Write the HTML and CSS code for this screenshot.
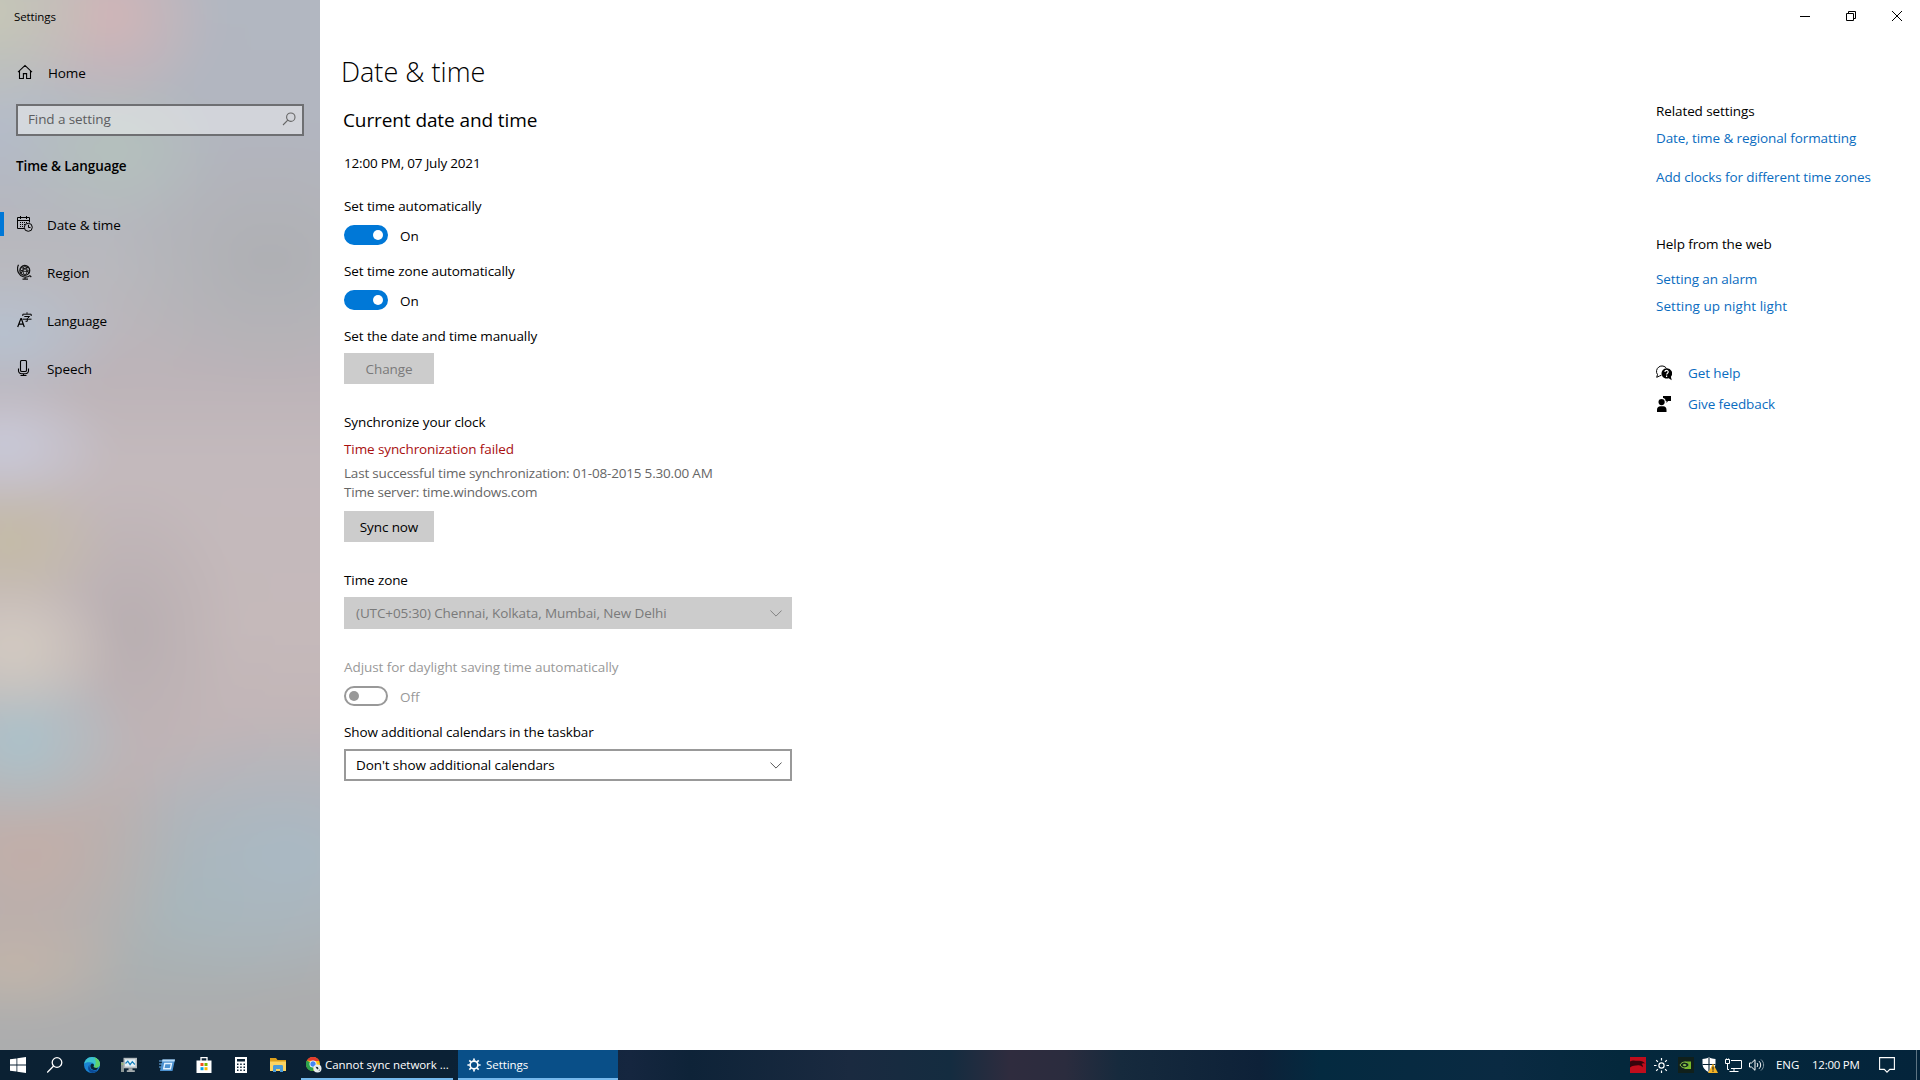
FILE: index.html
```html
<!DOCTYPE html>
<html lang="en">
<head>
  <meta charset="UTF-8">
  <meta name="viewport" content="width=device-width, initial-scale=1.0">
  <title>Settings</title>
  <link rel="stylesheet" href="styles.css">
</head>
<body>
  <div class="window">
    <aside class="sidebar">
      <div class="title">Settings</div>
      <a class="home">
        <svg width="16" height="16" viewBox="0 0 16 16" fill="none" stroke="#000" stroke-width="1.1">
          <path d="M1 8.2 8 1.4l7 6.8M2.5 7v7.5h3.9V9.6h3.2v4.9h3.9V7"/>
        </svg>
        <span>Home</span>
      </a>
      <div class="search">
        <span>Find a setting</span>
        <svg width="14" height="14" viewBox="0 0 14 14" fill="none" stroke="#666" stroke-width="1.1">
          <circle cx="8.8" cy="5.2" r="4.2"/>
          <path d="M5.8 8.2 1 13"/>
        </svg>
      </div>
      <h2 class="category">Time &amp; Language</h2>
      <nav class="nav">
        <a class="nav-item active">
          <svg width="16" height="16" viewBox="0 0 16 16" fill="none" stroke="#000">
            <path d="M7.5 12.5h-7v-11h12v5M.5 4.5h12M3.5 0v3M9.5 0v3"/>
            <path d="M3 6.5h1m1 0h1m1 0h1m1 0h1M3 8.5h1m1 0h1m1 0h1M3 10.5h1m1 0h1"/>
            <circle cx="11.3" cy="11.3" r="4"/>
            <path d="M11.5 8.8v2.7h2"/>
          </svg>
          <span>Date &amp; time</span>
        </a>
        <a class="nav-item">
          <svg width="16" height="16" viewBox="0 0 16 16" fill="none" stroke="#111">
            <circle cx="7.8" cy="6.4" r="4.9" stroke-width="1.3"/>
            <path d="M4 3.6c3 0 6.5 2.5 7.8 5.6M11.3 3.2c-3 .4-6.2 3-7.2 6.2M8 1.6c-2.600 2.700-2.800 6.400-.4 9.500M8 1.600c2.600 2.700 2.800 6.400.4 9.500M3 5.500c2.600 2.200 6.200 2.600 9.600.8"/>
            <path d="M1.500.8C.4 3 .2 6.200 1.500 8.800c1.900 4 7.200 5.600 11.400 3L14.300 13M8 13v2M5.500 15.200H11" stroke-width="1.200"/>
          </svg>
          <span>Region</span>
        </a>
        <a class="nav-item">
          <svg width="16" height="16" viewBox="0 0 16 16" fill="none" stroke="#000">
            <path d="M.7 15 3.900 6.500h.4L7.300 15M1.800 12.200h4.500" stroke-width="1.200"/>
            <path d="M10 .3v1.500M5.800 4V2.200h8.400V4M7.300 4.500h5.300l-2.300 2M5.500 7.200h9M10.300 6.500v2.800H8.500"/>
          </svg>
          <span>Language</span>
        </a>
        <a class="nav-item">
          <svg width="16" height="16" viewBox="0 0 16 16" fill="none" stroke="#000" stroke-width="1.1">
            <rect x="3.500" y=".5" width="6" height="11" rx="1.300"/>
            <path d="M1.500 8.500v2.300a3 3 0 0 0 3 3h4a3 3 0 0 0 3-3V8.500M6.500 13.800v2M3.500 15.500h6"/>
          </svg>
          <span>Speech</span>
        </a>
      </nav>
    </aside>

    <main class="content">
      <h1>Date &amp; time</h1>
      <h2>Current date and time</h2>
      <p class="now digits">12:00 PM, 07 July 2021</p>

      <p class="label first">Set time automatically</p>
      <div class="toggle-row"><span class="toggle on"></span><span class="state">On</span></div>
      <p class="label">Set time zone automatically</p>
      <div class="toggle-row"><span class="toggle on"></span><span class="state">On</span></div>
      <p class="label">Set the date and time manually</p>
      <button class="btn" disabled>Change</button>

      <p class="label section">Synchronize your clock</p>
      <p class="error">Time synchronization failed</p>
      <p class="info digits">Last successful time synchronization: 01-08-2015 5.30.00 AM<br>Time server: time.windows.com</p>
      <button class="btn sync">Sync now</button>

      <p class="label section">Time zone</p>
      <div class="select disabled">
        <span>(UTC+05:30) Chennai, Kolkata, Mumbai, New Delhi</span>
        <svg width="12" height="7" viewBox="0 0 12 7" fill="none" stroke="#838383"><path d="m.4.5 5.600 5.600L11.600.5"/></svg>
      </div>

      <p class="label section muted">Adjust for daylight saving time automatically</p>
      <div class="toggle-row muted"><span class="toggle"></span><span class="state">Off</span></div>
      <p class="label tight">Show additional calendars in the taskbar</p>
      <div class="select">
        <span>Don't show additional calendars</span>
        <svg width="12" height="7" viewBox="0 0 12 7" fill="none" stroke="#555"><path d="m.4.5 5.600 5.600L11.600.5"/></svg>
      </div>
    </main>

    <aside class="related">
      <div class="controls">
        <svg width="10" height="10" viewBox="0 0 10 10" fill="none" stroke="#000"><path d="M0 5.500h10"/></svg>
        <svg width="10" height="10" viewBox="0 0 10 10" fill="none" stroke="#000"><path d="M.5 2.500h7v7h-7zM2.500 2.500v-2h7v7h-2"/></svg>
        <svg width="10" height="10" viewBox="0 0 10 10" fill="none" stroke="#000"><path d="m0 0 10 10M10 0 0 10"/></svg>
      </div>
      <p class="heading">Related settings</p>
      <a class="regional">Date, time &amp; regional formatting</a>
      <a class="clocks">Add clocks for different time zones</a>
      <p class="heading web">Help from the web</p>
      <a class="alarm">Setting an alarm</a>
      <a class="night">Setting up night light</a>
      <a class="with-icon help">
        <svg width="16" height="16" viewBox="0 0 16 16">
          <path d="M5.500 10.200 3.500 11 .7 12.300l.8-2.700A5.300 5.300 0 1 1 10.500 3.300" fill="none" stroke="#000"/>
          <path d="M10.500 3.200a5.200 5.200 0 1 0 2.200 10l3 2-.8-3.500a5.200 5.200 0 0 0-4.400-8.500z"/>
          <path d="M8.900 7c.1-2.100 3.400-2 3.300 0 0 1.200-1.600 1.200-1.600 2.600M10.600 10.500v1.400" fill="none" stroke="#fff" stroke-width="1.200"/>
        </svg>
        <span>Get help</span>
      </a>
      <a class="with-icon feedback">
        <svg width="16" height="16" viewBox="0 0 16 16">
          <circle cx="5.600" cy="6.100" r="3.100"/>
          <path d="M1 16v-2.200c0-2.300 1.500-3.500 3.300-3.500h3c1.900 0 3.200 1.200 3.200 3.500V16zM7 0h8v5h-3l-1.500 1.900V5h-.8C9.500 3.200 8.500 2.200 7 2z"/>
        </svg>
        <span>Give feedback</span>
      </a>
    </aside>
  </div>

  <footer class="taskbar">
    <div class="pins">
      <svg width="16" height="16" viewBox="0 0 16 16" fill="#fff"><path d="M0 2.300 6.500 1.400v6.200H0zM7.300 1.300 16 0v7.600H7.300zM0 8.400h6.500v6.200L0 13.700zM7.300 8.400H16V16l-8.700-1.300z"/></svg>
      <svg width="16" height="16" viewBox="0 0 16 16" fill="none" stroke="#fff" stroke-width="1.300"><circle cx="10" cy="5.500" r="4.800"/><path d="M6.600 9 .2 15.500"/></svg>
      <svg width="16" height="16" viewBox="0 0 16 16">
        <circle cx="8" cy="8" r="8" fill="#1b83d2"/>
        <path d="M.2 7C.9 2.800 4 0 8 0c4.700 0 8 3.400 8 7 0 2.300-1.700 4-4.100 4-1.300 0-2.400-.4-2.200-1.300.8-.9.7-3.700-2.200-4.200C4.500 5 1.500 5 .2 7z" fill="#3cc3cf"/>
        <path d="M10 .3c3.500.8 6 3.700 6 6.700 0 2.300-1.700 4-4.100 4-1.300 0-2.400-.4-2.200-1.300 2.600-1.600 2.800-6 .3-9.400z" fill="#5ed16c"/>
        <path d="M5.500 7.500c-.7 3.500 2.200 6.500 6.200 5.900.9-.1 1.800-.5 2.700-1a8 8 0 0 1-6 3.500C4 15.500 3 10.500 5.500 7.500z" fill="#0b4a96"/>
        <path d="M9.500 9.800c.7 1.300 3.300 1.500 5 .5l-1.800 2.500C8 14 5.700 10.700 6.600 8c.7-1.600 3-1.500 3.300 0 .1.700-.4 1.200-.4 1.800z" fill="#0a2436"/>
      </svg>
      <svg width="16" height="16" viewBox="0 0 16 16">
        <path d="M0 5h3v10H0z" fill="#8b9695"/><path d="M.6 6.500h1.800v1H.6z" fill="#9cdc52"/>
        <path d="M2.500.8H16v10.500H2.500z" fill="#b4bbbe"/><path d="M4 2.300h10.500v7.300H4z" fill="#e4f1f7"/>
        <path d="m4.500 6.500 2.300-2.300 2.300 3.500 2.200-3 2.500 2.800" fill="none" stroke="#1681bd" stroke-width="1.200"/>
        <path d="M7.500 11.300h4v2h2.300V15h-8v-1.700h1.700z" fill="#a5acae"/>
      </svg>
      <svg width="16" height="16" viewBox="0 0 16 16">
        <path d="M3.500 2.500H16L13.500 14H1z" fill="#4b91d0"/>
        <path d="M3.500 2.500H16l-.5 2H3z" fill="#b9dcf7"/>
        <path d="M5.800 6.500h6.700l-1.100 5.200H4.700z" fill="none" stroke="#e4f3ff" stroke-width="1.400"/>
        <path d="M0 4h3M0 7h3M0 10h2" stroke="#6eb4ef" stroke-width="1.200"/>
      </svg>
      <svg width="16" height="16" viewBox="0 0 16 16">
        <path d="M5 4V.7h6V4" fill="none" stroke="#fff" stroke-width="1.300"/>
        <path d="M.5 3.500h15V16H.5z" fill="#fff"/>
        <path d="M4.500 6h3v3h-3z" fill="#f25022"/><path d="M8.500 6h3v3h-3z" fill="#7fba00"/>
        <path d="M4.500 10.200h3v3h-3z" fill="#00a4ef"/><path d="M8.500 10.200h3v3h-3z" fill="#ffb900"/>
      </svg>
      <svg width="16" height="16" viewBox="0 0 16 16">
        <path d="M2 0h12v16H2z" fill="#fff"/>
        <path d="M4 2h8v2.500H4zM4 6.500h1.500V8H4zM7.200 6.500h1.500V8H7.200zM10.500 6.500H12V8h-1.500zM4 9.500h1.500V11H4zM7.200 9.500h1.500V11H7.200zM10.500 9.500H12V11h-1.500zM4 12.500h1.500V14H4zM7.200 12.500h1.500V14H7.200zM10.500 12.500H12V14h-1.500z" fill="#0b2133"/>
      </svg>
      <svg width="16" height="16" viewBox="0 0 16 16">
        <path d="M0 1h6l1.500 2H16v11H0z" fill="#dda01c"/>
        <path d="M0 4.500h16V14H0z" fill="#fcd462"/>
        <path d="M3 15V9.500c0-1 .5-1.500 1.500-1.500h7c1 0 1.500.5 1.500 1.500V15h-3v-3H6v3z" fill="#4a9bd8"/>
      </svg>
    </div>
    <div class="app chrome">
      <svg width="16" height="16" viewBox="0 0 16 16">
        <circle cx="7" cy="7" r="7" fill="#fbc116"/>
        <path d="M7 7 7.500 14A7 7 0 0 1 .9 3.400z" fill="#2ba24c"/>
        <path d="M.9 3.400A7 7 0 0 1 13.300 4H7z" fill="#e33b2e"/>
        <circle cx="7" cy="7" r="3.500" fill="#fff"/><circle cx="7" cy="7" r="2.700" fill="#4285f4"/>
        <circle cx="11.500" cy="11.500" r="4" fill="#e8eef0"/>
        <path d="m9.500 9.800 2.400.2.600 1.800-1.300.7zM12.500 13l1.500-.5-.8 1.600z" fill="#23343c"/>
      </svg>
      <span>Cannot sync network ...</span>
    </div>
    <div class="app active">
      <svg width="14" height="14" viewBox="0 0 14 14" fill="none" stroke="#fff">
        <circle cx="7" cy="7" r="3.900" stroke-width="1.700"/>
        <path d="M7 .4v2.300M7 11.300v2.300M.4 7h2.300M11.300 7h2.300M2.300 2.300 4 4M10 10l1.700 1.700M11.700 2.300 10 4M4 10l-1.700 1.700" stroke-width="1.700"/>
      </svg>
      <span>Settings</span>
    </div>
    <div class="tray">
      <svg width="16" height="16" viewBox="0 0 16 16">
        <path d="M0 0h16v16H0z" fill="#c00d1c"/>
        <path d="M0 4.500c3-2 6-.5 8-.8 3-.3 5.500.5 7.500 3-2-.6-3-.5-4 .4 1.500 1 1.500 2.200 1 3.200-1-1.600-2.500-2.300-4.500-2-3 .5-5.500.2-8 2.200z" fill="#35040c"/>
      </svg>
      <svg class="sun" width="15" height="15" viewBox="0 0 15 15" fill="none" stroke="#fff" stroke-width="1.200">
        <circle cx="7.500" cy="7.500" r="2.600"/>
        <path d="M7.500 0v2.500M7.500 12.500V15M0 7.500h2.500M12.500 7.500H15M2.200 2.200l1.700 1.700M11.100 11.100l1.700 1.700M12.800 2.200l-1.700 1.700M3.900 11.100l-1.700 1.700"/>
      </svg>
      <svg class="nvidia" width="16" height="16" viewBox="0 0 16 16">
        <path d="M0 0h16v16H0z" fill="#10201b"/>
        <path d="M6.500 4.500H13v7.500H6.500z" fill="#75b82a"/>
        <path d="M2 8c2-4 7.500-3.700 9.300 0-2.200 3.800-7.300 3.700-9.300 0z" fill="#10201b" stroke="#86bf48"/>
        <path d="M4.600 8c1-1.500 2.800-1.500 4 0-1 1.600-3 1.600-4 0z" fill="#86bf48"/>
      </svg>
      <svg class="shield" width="16" height="16" viewBox="0 0 16 16">
        <path d="M7 .3C5 1.500 3 2 .5 2v4.500c0 4.200 2.700 7 6.500 8.700 3.800-1.700 6.500-4.500 6.500-8.700V2C11 2 9 1.500 7 .3z" fill="#fff"/>
        <path d="M7 .5v14M.5 7.500h13" stroke="#0a2436" stroke-width="1.100"/>
        <path d="M11 6.500 16 16H6z" fill="#f5b324"/><path d="M11 9.500v3.200M11 13.500v1.300" stroke="#222" stroke-width="1.200"/>
      </svg>
      <svg class="net" width="17" height="15" viewBox="0 0 17 15" fill="none" stroke="#fff">
        <path d="M6 2.500h10.500v8H6M4.500 13.500h9M9 10.500v3M.5 1.500h4v4h-4zM1.500.5v1M3.500.5v1M2.500 5.500v6h1.500"/>
      </svg>
      <svg class="volume" width="16" height="14" viewBox="0 0 16 14" fill="none" stroke="#fff">
        <path d="M.5 5v4h2l3.500 3.300V1.700L2.500 5zM8 5c1 1.200 1 2.800 0 4M10 3.200c2.200 2.100 2.200 5.500 0 7.600"/>
        <path d="M12 1.500c3.500 3 3.500 8 0 11" stroke="#8699a5"/>
      </svg>
      <span class="lang">ENG</span>
      <span class="clock">12:00 PM</span>
      <svg class="action" width="16" height="16" viewBox="0 0 16 16" fill="none" stroke="#fff" stroke-width="1.1"><path d="M.6.600h14.800v11.800h-4.600L8 15.200l-2.700-2.800H.6z"/></svg>
      <span class="peek"></span>
    </div>
  </footer>
</body>
</html>
```
FILE: styles.css
```css
* {
  box-sizing: border-box;
}

body {
  margin: 0;
  width: 1920px;
  height: 1080px;
  overflow: hidden;
  display: flex;
  flex-direction: column;
  background: #fff;
  color: #000;
  font-family: "Open Sans", "Noto Sans", sans-serif;
  font-size: 13.5px;
  line-height: 20px;
  letter-spacing: -0.1px;
}

h1, h2, p {
  margin: 0;
}

svg {
  flex: none;
  display: block;
}

.window {
  flex: 1;
  display: flex;
}

/* sidebar */
.sidebar {
  position: relative;
  z-index: 0;
  width: 320px;
  padding-top: 9px;
  overflow: hidden;
}

/* acrylic backdrop, 60px larger than the sidebar on every side */
.sidebar::before {
  content: "";
  position: absolute;
  z-index: -1;
  inset: -60px;
  filter: blur(14px);
  background:
    radial-gradient(ellipse 120px 110px at 50px 70px, #c8c8b6, transparent),
    radial-gradient(ellipse 110px 100px at 168px 75px, #d2b4b6, transparent),
    radial-gradient(ellipse 110px 80px at 175px 210px, #b4c1bc, transparent),
    radial-gradient(ellipse 130px 90px at 65px 180px, #b5bcc9, transparent),
    radial-gradient(ellipse 120px 70px at 65px 395px, #b6c2d1, transparent),
    radial-gradient(ellipse 170px 130px at 330px 320px, #aeafb3, transparent),
    radial-gradient(ellipse 110px 65px at 65px 504px, #c9cada, transparent),
    radial-gradient(ellipse 105px 70px at 70px 602px, #c4bba5, transparent),
    radial-gradient(ellipse 105px 75px at 75px 708px, #d3cbc1, transparent),
    radial-gradient(ellipse 115px 90px at 80px 801px, #aac2cb, transparent),
    radial-gradient(ellipse 110px 150px at 190px 690px, #b8aeb1, transparent),
    radial-gradient(ellipse 160px 140px at 90px 915px, #c2aea8, transparent),
    radial-gradient(ellipse 120px 65px at 75px 1024px, #c2b6aa, transparent),
    radial-gradient(ellipse 190px 140px at 350px 915px, #a9b9c4, transparent),
    radial-gradient(ellipse 170px 120px at 245px 960px, #a7b5b8, transparent),
    linear-gradient(#b2b7c1 0, #b2b7c1 60px, #b2b5bf 210px, #b9b9be 330px, #bcb3b8 430px, #c3b9bc 520px, #c5b9ba 690px, #c1b5b7 790px, #b8b2b5 880px, #b0b0b2 960px, #acadae 1040px, #acacae 1170px);
}

.title {
  margin-left: 14px;
  font-size: 11.5px;
  line-height: 16px;
}

.home {
  display: flex;
  gap: 15px;
  margin: 38px 0 0 17px;
}

.home svg {
  margin-top: 1px;
}

.search {
  display: flex;
  align-items: center;
  justify-content: space-between;
  width: 288px;
  height: 32px;
  margin: 21px 0 0 16px;
  padding: 0 6px 2px 10px;
  border: 2px solid #6e6f72;
  background: rgba(255, 255, 255, 0.42);
  color: #5c5d60;
}

.category {
  margin: 20px 0 0 16px;
  font-size: 13.5px;
  font-weight: 600;
}

.nav {
  margin-top: 24px;
}

.nav-item {
  display: flex;
  align-items: center;
  gap: 14px;
  height: 48px;
  padding-left: 17px;
}

.nav-item span {
  padding-top: 2px;
}

.nav-item.active {
  padding-left: 0;
}

.nav-item.active::before {
  content: "";
  width: 4px;
  height: 24px;
  margin-right: -1px;
  background: #0078d7;
}

/* main column */
.content {
  flex: 1;
  padding: 54px 0 0 24px;
}

h1 {
  margin-left: -3px;
  font-size: 27px;
  font-weight: 300;
  line-height: 36px;
  letter-spacing: 0;
}

.content h2 {
  margin: 17px 0 0 -1px;
  font-size: 19px;
  font-weight: 400;
  line-height: 26px;
  letter-spacing: -0.1px;
}

.digits {
  letter-spacing: -0.19px;
}

.now {
  margin-top: 20px;
}

.label {
  margin-top: 16px;
}

.label.first {
  margin-top: 23px;
}

.label.section {
  margin-top: 28px;
}

.label.tight {
  letter-spacing: -0.14px;
}

.toggle-row {
  display: flex;
  gap: 12px;
  height: 20px;
  margin-top: 9px;
}

.toggle {
  display: flex;
  align-items: center;
  width: 44px;
  height: 20px;
  padding: 0 3px;
  border: 2px solid #999;
  border-radius: 10px;
}

.toggle::before {
  content: "";
  width: 10px;
  height: 10px;
  border-radius: 50%;
  background: #999;
}

.toggle.on {
  justify-content: flex-end;
  border-color: #0078d7;
  background: #0078d7;
}

.toggle.on::before {
  background: #fff;
}

.state {
  line-height: 22px;
}

.muted {
  color: #999;
  letter-spacing: -0.07px;
}

.btn {
  display: block;
  width: 90px;
  height: 31px;
  margin-top: 7px;
  padding: 0;
  border: 0;
  background: #ccc;
  color: #000;
  font: inherit;
  line-height: 32px;
  letter-spacing: inherit;
}

.btn:disabled {
  color: #7a7a7a;
}

.btn.sync {
  margin-top: 9px;
}

.error {
  margin-top: 7px;
  color: #a80f0f;
}

.info {
  margin-top: 5px;
  line-height: 19px;
  color: #666;
}

.select {
  display: flex;
  align-items: center;
  justify-content: space-between;
  width: 448px;
  height: 32px;
  margin-top: 7px;
  padding: 0 8px 0 10px;
  border: 2px solid #999;
}

.select.disabled {
  border-color: #ccc;
  background: #ccc;
  color: #7a7a7a;
}

/* right column */
.related {
  width: 264px;
  display: flex;
  flex-direction: column;
}

.related a {
  color: #0a6cc0;
}

.controls {
  display: flex;
  justify-content: flex-end;
  gap: 36px;
  padding: 11px 18px 0 0;
}

.heading {
  margin-top: 80px;
}

.regional {
  margin-top: 7px;
}

.clocks {
  margin-top: 19px;
}

.heading.web {
  margin-top: 47px;
}

.alarm {
  margin-top: 15px;
}

.related .night {
  margin-top: 7px;
  letter-spacing: 0.05px;
}

.with-icon {
  display: flex;
  gap: 16px;
}

.with-icon svg {
  margin-top: 2px;
}

.help {
  margin-top: 47px;
}

.feedback {
  margin-top: 11px;
}

/* taskbar */
.taskbar {
  display: flex;
  height: 30px;
  color: #fff;
  font-size: 11.5px;
  line-height: 30px;
  letter-spacing: -0.05px;
  background: linear-gradient(90deg, #0b2133 0, #0b2135 450px, #15263f 630px, #0e2338 690px, #1a2a40 850px, #142c40 950px, #2f2c3e 1010px, #2b2c3e 1065px, #162a3d 1120px, #0d2138 1260px, #042a40 1320px, #0a2a42 1500px, #04283c 1620px, #04243b 1920px);
}

.pins {
  display: flex;
  align-items: center;
  justify-content: space-between;
  width: 276px;
  margin: 0 15px 0 10px;
}

.app {
  display: flex;
  align-items: center;
  border-bottom: 2px solid #76b9ed;
}

.chrome {
  width: 152px;
  padding: 1px 0 0 5px;
  gap: 3px;
}

.app.active {
  width: 160px;
  margin-left: 5px;
  padding: 1px 0 0 9px;
  gap: 5px;
  background: #094f88;
}

.tray {
  display: flex;
  align-items: center;
  margin-left: auto;
}

.sun {
  margin-left: 8px;
}

.nvidia {
  margin-left: 9px;
}

.shield {
  margin-left: 8px;
}

.net {
  margin-left: 7px;
}

.volume {
  margin-left: 7px;
}

.lang {
  width: 36px;
  margin-left: 11px;
}

.clock {
  width: 50px;
  letter-spacing: -0.25px;
}

.action {
  margin-left: 17px;
}

.peek {
  width: 4px;
  height: 30px;
  margin-left: 21px;
  border-left: 1px solid #5d7382;
}
```
